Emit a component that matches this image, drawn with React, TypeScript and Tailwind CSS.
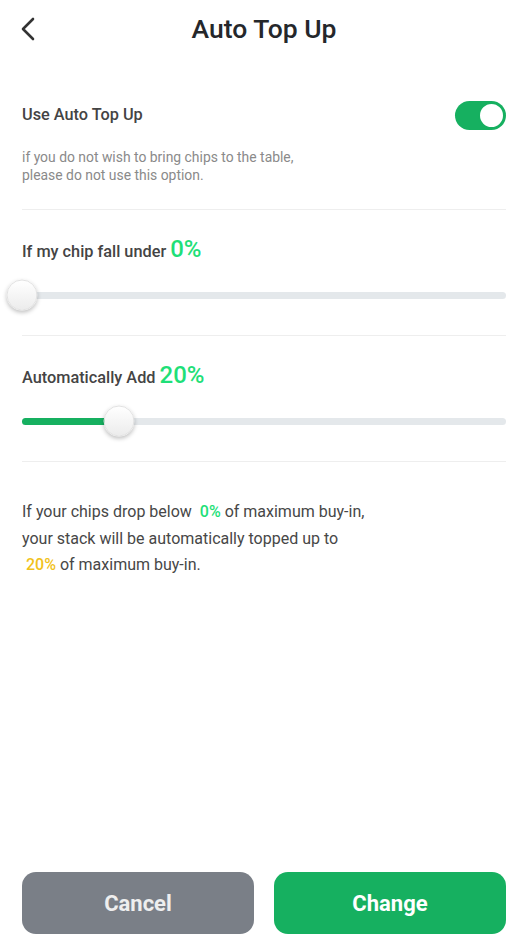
import React from 'react';

interface SliderProps {
  value: number;
}

const Slider: React.FC<SliderProps> = ({ value }) => {
  return (
    <div className="relative flex h-[30px] items-center">
      <div className="relative h-[7px] w-full rounded-full bg-[#e4e8eb]">
        <div
          className="h-full rounded-full bg-[#16b060]"
          style={{ width: `${value}%` }}
        />
        <div
          className="absolute top-1/2 h-[31px] w-[31px] -translate-x-1/2 -translate-y-1/2 rounded-full border border-[#e2e2e2] bg-gradient-to-b from-white to-[#ececec] shadow-[0_2px_4px_rgba(0,0,0,0.25)]"
          style={{ left: `${value}%` }}
        />
      </div>
    </div>
  );
};

const Divider = () => <div className="h-px bg-[#eeeeee]" />;

export default function App() {
  return (
    <div className="flex min-h-[951px] w-[530px] flex-col bg-white pl-[22px] pr-[24px] font-['Roboto',sans-serif]">
      {/* header */}
      <div className="relative flex h-[58px] items-center justify-center">
        <button className="absolute left-[-2px] top-[17px] text-[#333]">
          <svg width="18" height="24" viewBox="0 0 18 24" fill="none" stroke="currentColor" strokeWidth="2.6" strokeLinecap="round" strokeLinejoin="round">
            <path d="M13 2 L3 12 L13 22" />
          </svg>
        </button>
        <h1 className="text-[26.5px] font-medium text-[#25272b]">Auto Top Up</h1>
      </div>

      {/* toggle row */}
      <div className="mt-[43px] flex h-[29px] items-center justify-between">
        <span className="text-[16.3px] font-medium text-[#444]">Use Auto Top Up</span>
        <div className="flex h-[29px] w-[51px] items-center justify-end rounded-full bg-[#16b060] p-[1px]">
          <div className="h-[27px] w-[27px] rounded-full border-2 border-[#16b060] bg-white" />
        </div>
      </div>
      <p className="mb-[25px] mt-[18px] text-[13.9px] leading-[18px] text-[#8a8a8a]">
        if you do not wish to bring chips to the table,
        <br />
        please do not use this option.
      </p>
      <Divider />

      {/* threshold */}
      <div className="mt-[26px] flex h-[28px] items-end">
        <span className="text-[16.3px] font-medium text-[#444]">If my chip fall under</span>
        <span className="ml-[4px] text-[24px] font-medium leading-[29px] text-[#1fdf78]">0%</span>
      </div>
      <div className="mb-[25px] mt-[16px]">
        <Slider value={0} />
      </div>
      <Divider />

      {/* add amount */}
      <div className="mt-[26px] flex h-[28px] items-end">
        <span className="text-[16.3px] font-medium text-[#444]">Automatically Add</span>
        <span className="ml-[4px] text-[24px] font-medium leading-[29px] text-[#1fdf78]">20%</span>
      </div>
      <div className="mb-[25px] mt-[16px]">
        <Slider value={20} />
      </div>
      <Divider />

      {/* summary */}
      <p className="mt-[37px] text-[16px] leading-[26.5px] text-[#474747]">
        If your chips drop below &nbsp;<span className="font-medium text-[#1fdf78]">0%</span> of maximum buy-in,
        <br />
        your stack will be automatically topped up to
        <br />
        &nbsp;<span className="font-medium text-[#f1c21b]">20%</span> of maximum buy-in.
      </p>

      {/* actions */}
      <div className="mb-[17px] mt-auto flex gap-[20px]">
        <button className="h-[62px] flex-1 rounded-[14px] bg-[#7a7f87] text-[22px] font-bold text-[#eeeeee]">
          Cancel
        </button>
        <button className="h-[62px] flex-1 rounded-[14px] bg-[#16b060] text-[22px] font-bold text-white">
          Change
        </button>
      </div>
    </div>
  );
}
